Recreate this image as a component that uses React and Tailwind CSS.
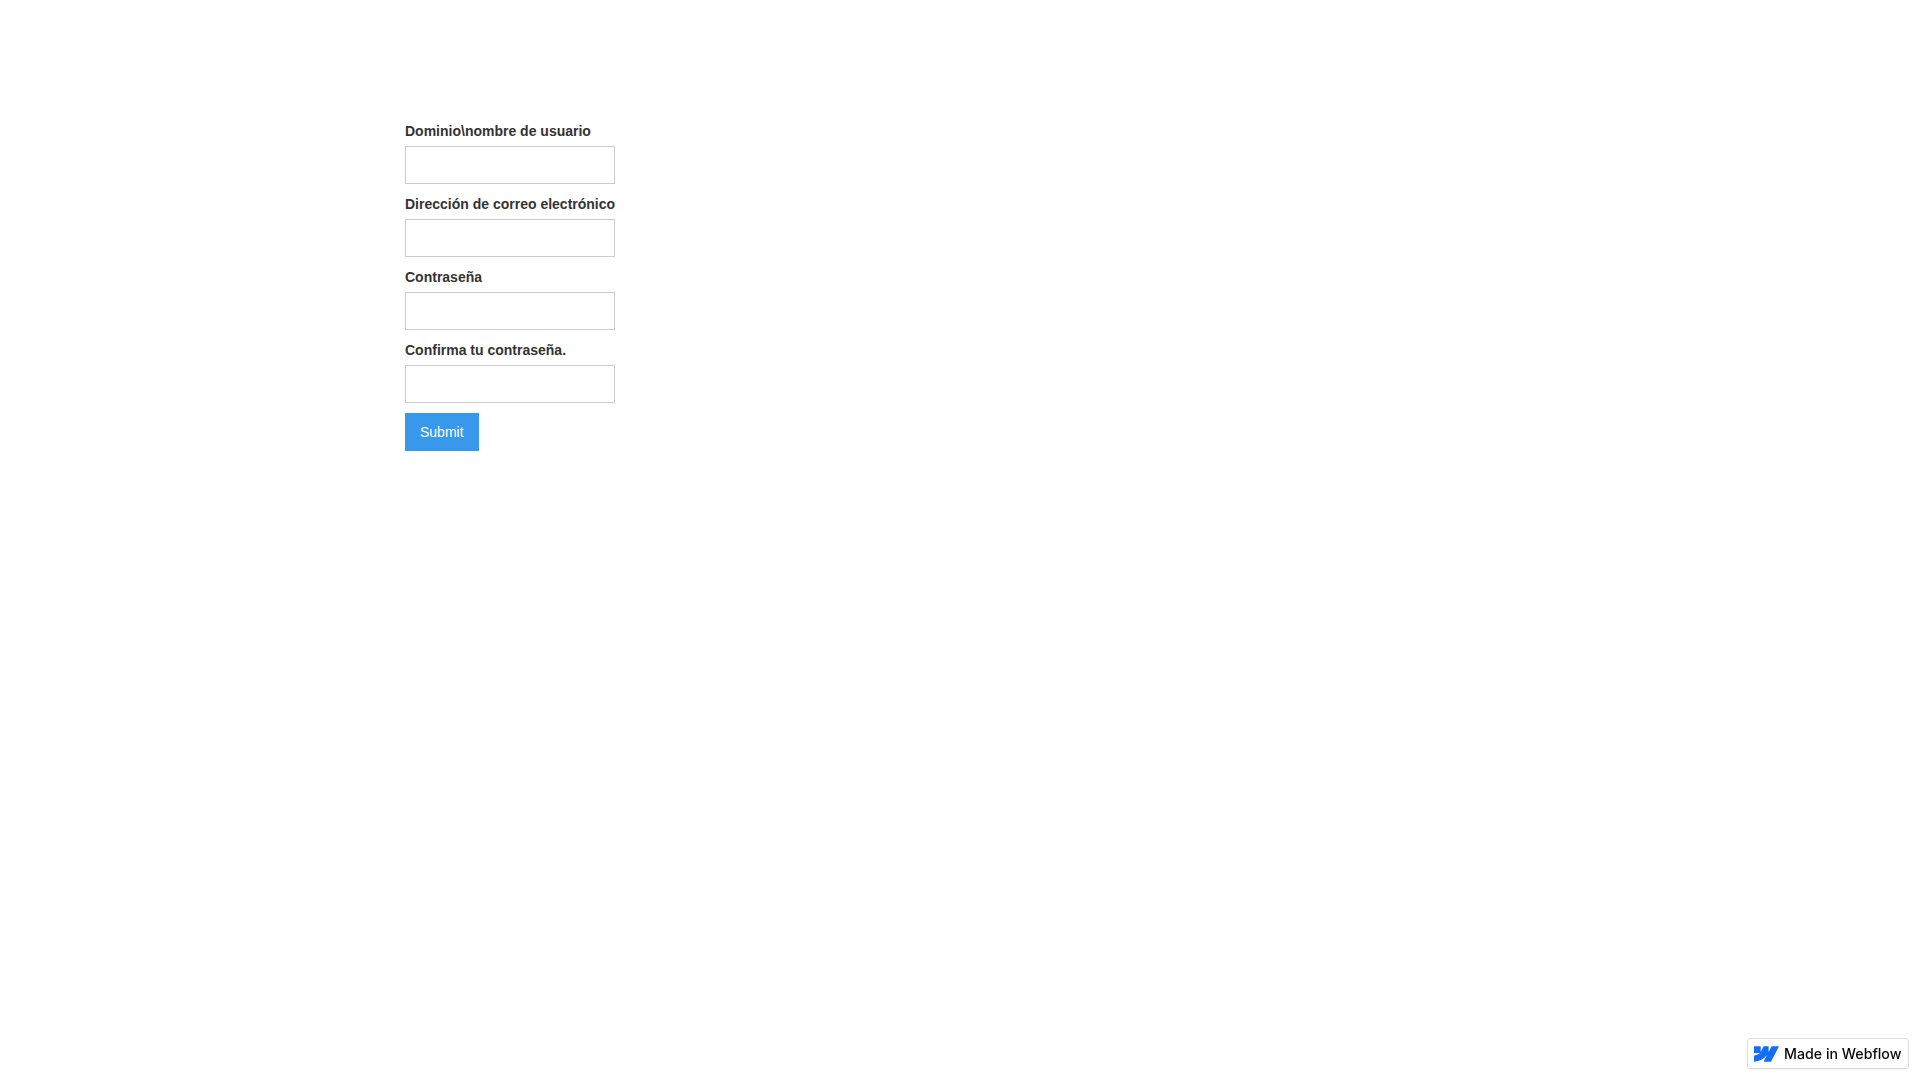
const fields = [
  'Dominio\\nombre de usuario',
  'Dirección de correo electrónico',
  'Contraseña',
  'Confirma tu contraseña.',
];

export default function App() {
  return (
    <div className="min-h-screen bg-white font-['Liberation_Sans',Arial,sans-serif] text-sm leading-5 text-[#333]">
      <div className="ml-[405px] w-[210px] pt-[121px]">
        <form>
          {fields.map((label) => (
            <div key={label}>
              <label className="mb-[5px] block font-bold whitespace-nowrap">{label}</label>
              <input type="text" className="mb-2.5 block h-[38px] w-full border border-[#ccc] bg-white px-3 py-2" />
            </div>
          ))}
          <button type="button" className="block h-[38px] bg-[#3898ec] px-[15px] text-white">Submit</button>
        </form>
      </div>
      <a className="fixed right-3 bottom-3 flex h-[29px] w-[160px] items-center gap-[5px] rounded-[3px] bg-white pl-1.5 font-['Inter',sans-serif] text-[14.2px] font-medium whitespace-nowrap text-[#080808] shadow-[0_0_0_1px_rgba(0,0,0,0.1),0_1px_3px_rgba(0,0,0,0.1)]">
        <svg width="25" height="16" viewBox="0 4.5 24 15">
          <path fill="#146ef5" d="M24 4.515L16.342 19.5H9.149L12.354 13.289H12.21C9.566 16.725 5.621 18.987 0 19.5V13.375C0 13.375 3.596 13.162 5.71 10.94H0V4.515H6.417V9.8L6.561 9.799L9.183 4.515H14.036V9.766L14.18 9.766L16.901 4.515H24Z" />
        </svg>
        <span>Made in Webflow</span>
      </a>
    </div>
  );
}
